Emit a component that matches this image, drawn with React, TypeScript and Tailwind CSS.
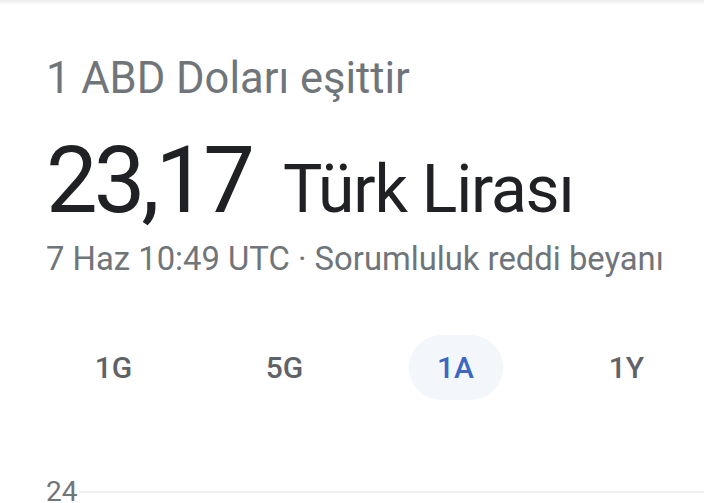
import React from 'react';

const tabs = ['1G', '5G', '1A', '1Y'];

export default function App() {
  return (
    <main className="h-[503px] w-[704px] overflow-hidden bg-white font-['Roboto',sans-serif]">
      <div className="h-[5px] bg-gradient-to-b from-[#ececec] to-white" />
      <div className="pl-[46px] pt-[50px]">
        <div className="text-[43.5px] leading-[48px] text-[#70757a]">1 ABD Doları eşittir</div>
        <div className="mt-8 flex items-baseline text-[#202124]">
          <span className="text-[92px] leading-[92px] tracking-[-4px]">23,17</span>
          <span className="ml-[32px] text-[66px] leading-[66px] tracking-[-1.2px]">Türk Lirası</span>
        </div>
        <div className="mt-3 text-[32.8px] leading-[40px] text-[#70757a] whitespace-nowrap">
          7 Haz 10:49 UTC · Sorumluluk reddi beyanı
        </div>
      </div>

      <div className="mt-[56px] flex pl-[28px]">
        {tabs.map((t) => (
          <div key={t} className="flex h-[65px] w-[171px] shrink-0 items-center justify-center">
            {t === '1A' ? (
              <span className="flex h-[65px] w-[94px] items-center justify-center rounded-full bg-[#f3f6fa] text-[30px] font-medium text-[#3c67c2]">
                {t}
              </span>
            ) : (
              <span className="text-[30px] font-medium text-[#5f6368]">{t}</span>
            )}
          </div>
        ))}
      </div>

      <div className="mt-[76px] flex items-center pl-[46px]">
        <span className="text-[28px] leading-[32px] text-[#70757a]">24</span>
        <div className="ml-[2px] h-[2px] flex-1 bg-[#f0f0f0]" />
      </div>
    </main>
  );
}
